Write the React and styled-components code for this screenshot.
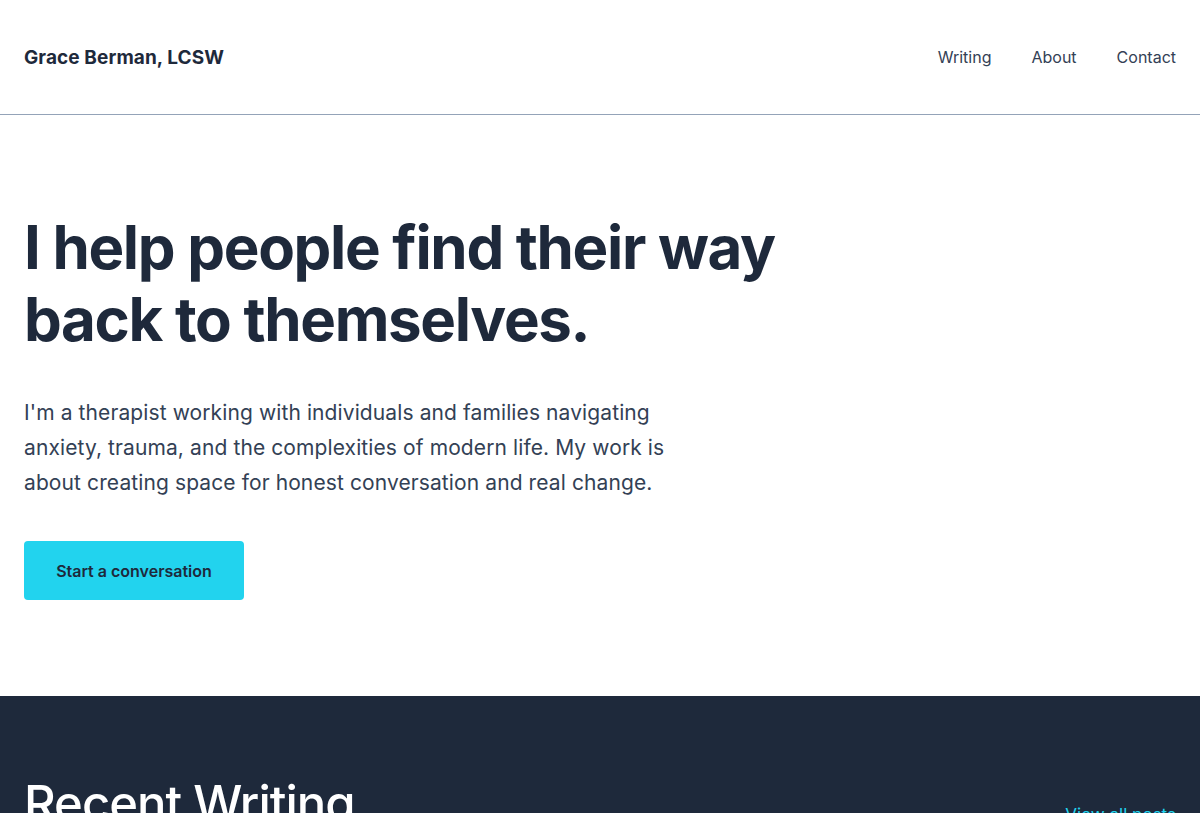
import React from 'react';
import styled, { createGlobalStyle } from 'styled-components';

const GlobalStyle = createGlobalStyle`
  * { box-sizing: border-box; }
  body {
    margin: 0;
    background: #ffffff;
    font-family: "Inter", "DejaVu Sans", sans-serif;
    color: #1e293b;
  }
  a { text-decoration: none; color: inherit; }
`;

const Header = styled.header`
  height: 115px;
  padding: 0 24px;
  display: flex;
  align-items: center;
  justify-content: space-between;
  border-bottom: 1px solid #94a3b8;
`;

const Logo = styled.a`
  font-size: 19px;
  font-weight: 700;
  letter-spacing: 0.005em;
  color: #1e293b;
`;

const Nav = styled.nav`
  display: flex;
  gap: 40px;
`;

const NavLink = styled.a`
  font-size: 16px;
  color: #334155;
`;

const Hero = styled.section`
  padding: 96px 24px 96px;
`;

const Title = styled.h1`
  margin: 0 0 40px;
  max-width: 800px;
  font-size: 60px;
  line-height: 72px;
  font-weight: 700;
  letter-spacing: -0.022em;
  color: #1e293b;
`;

const Lead = styled.p`
  margin: 0 0 41px;
  max-width: 670px;
  font-size: 21px;
  line-height: 35px;
  letter-spacing: 0.005em;
  color: #334155;
`;

const Button = styled.a`
  display: inline-flex;
  align-items: center;
  justify-content: center;
  width: 220px;
  height: 59px;
  background: #22d3ee;
  border-radius: 4px;
  font-size: 16px;
  font-weight: 600;
  color: #1e293b;
`;

const Writing = styled.section`
  background: #1e293b;
  padding: 79px 24px 80px;
  min-height: 300px;
`;

const SectionHead = styled.div`
  display: flex;
  align-items: baseline;
  justify-content: space-between;
`;

const SectionTitle = styled.h2`
  margin: 0;
  font-size: 49px;
  line-height: 58px;
  font-weight: 500;
  letter-spacing: -0.02em;
  color: #ffffff;
`;

const MoreLink = styled.a`
  font-size: 17px;
  color: #22d3ee;
`;

export default function App() {
  return (
    <>
      <GlobalStyle />
      <Header>
        <Logo href="#">Grace Berman, LCSW</Logo>
        <Nav>
          <NavLink href="#">Writing</NavLink>
          <NavLink href="#">About</NavLink>
          <NavLink href="#">Contact</NavLink>
        </Nav>
      </Header>
      <Hero>
        <Title>I help people find their way back to themselves.</Title>
        <Lead>
          I'm a therapist working with individuals and families navigating anxiety, trauma, and the
          complexities of modern life. My work is about creating space for honest conversation and
          real change.
        </Lead>
        <Button href="#">Start a conversation</Button>
      </Hero>
      <Writing>
        <SectionHead>
          <SectionTitle>Recent Writing</SectionTitle>
          <MoreLink href="#">View all posts</MoreLink>
        </SectionHead>
      </Writing>
    </>
  );
}
